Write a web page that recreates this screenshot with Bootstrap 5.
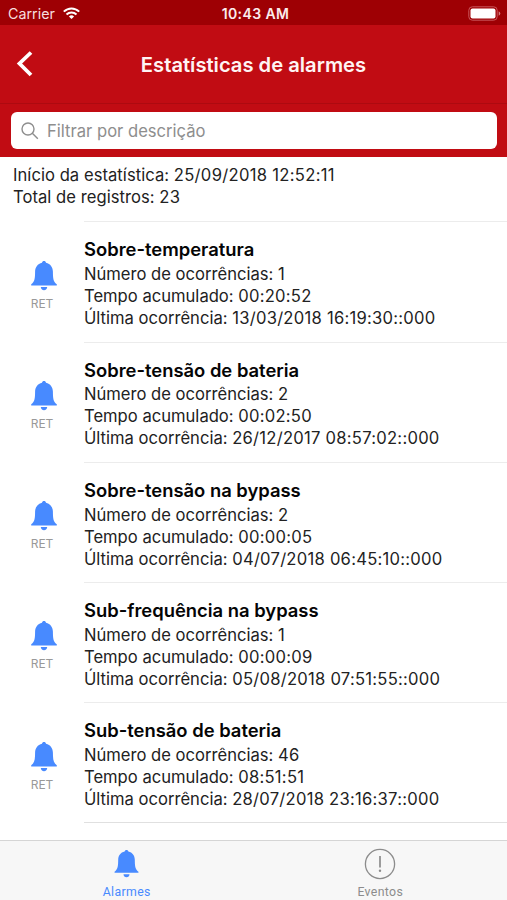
<!DOCTYPE html>
<html lang="pt-BR">
<head>
<meta charset="utf-8">
<meta name="viewport" content="width=device-width, initial-scale=1">
<title>Estatísticas de alarmes</title>
<link href="https://cdn.jsdelivr.net/npm/bootstrap@5.3.0/dist/css/bootstrap.min.css" rel="stylesheet">
<style>
  body { font-family: Inter, "Liberation Sans", sans-serif; color: #222; height: 900px; overflow: hidden; }
  .status-bar { height: 25px; background: #9e0004; font-size: 14.3px; padding: 2px 6px 0 8px; }
  .status-bar > * { flex: 1 1 0; }
  .carrier { color: #f6dede; }
  .wifi { margin-bottom: 2px; }
  .clock { font-weight: 600; font-size: 14px; letter-spacing: .4px; color: #fbecec; padding-left: 2px; }
  .title-bar { height: 79px; background: #c10c13; border-bottom: 1px solid #ad0a10; }
  .title-bar h1 { font-size: 20.2px; font-weight: 600; color: #fff4f4; padding-top: 2px; }
  .side { width: 52px; }
  .search-bar { height: 53px; background: #c10c13; padding: 8px 10px 8px 11px; }
  .search-field { height: 37px; border-radius: 6px; padding: 1px 10px 0; color: #8e8e8e; font-size: 16.6px; }
  .summary { height: 64.4px; padding: 6.5px 13px 0; font-size: 16.6px; line-height: 22px; letter-spacing: .04px; }
  .val { letter-spacing: .25px; }
  .summary .val { letter-spacing: .3px; }
  .alarm-side { width: 84px; padding-top: 39.5px; padding-left: 3px; }
  .alarm-side span { font-size: 12px; line-height: 16px; color: #999; padding-top: 5px; padding-right: 3px; }
  .alarm-text { height: 120.2px; border-top: 1.5px solid #ececec; padding-top: 15px; font-size: 16.6px; line-height: 22px; white-space: nowrap; }
  .alarm-text h2 { font-size: 18.4px; font-weight: 600; line-height: 25.8px; color: #050505; }
  .list-end { margin-left: 84px; border-top: 1px solid #e0e0e0; }
  .tab-bar { height: 60px; background: #f7f7f7; border-top: 1px solid #d5d5d5; font-family: Roboto, sans-serif; font-size: 12.3px; letter-spacing: .35px; line-height: 16px; color: #8c8c8c; }
  .tab-bar a { color: inherit; padding-top: 6.5px; }
  .tab-bar a.active { color: #488aff; }
  .tab-icon { height: 32px; }
  .bell { fill: #488aff; }
</style>
</head>
<body class="bg-white d-flex flex-column">
<svg class="d-none">
  <symbol id="bell" viewBox="0 0 26 30">
    <path d="M13 0c1.100 0 1.800.7 2 1.700C19.400 2.700 21.800 6.200 21.900 10.500C22 16.500 22 20.600 25.800 23.300V24.500H.2V23.300C4 20.600 4 16.500 4.100 10.500C4.200 6.200 6.600 2.700 11 1.700C11.200.7 11.900 0 13 0Z"/>
    <path d="M9.800 26h6.400c0 2-1.400 3.200-3.200 3.200S9.800 28 9.800 26Z"/>
  </symbol>
</svg>

<header class="text-white flex-shrink-0">
  <div class="status-bar d-flex align-items-center">
    <div class="d-flex align-items-center gap-2">
      <span class="carrier">Carrier</span>
      <svg class="wifi" width="17" height="12" viewBox="0 0 17 12" fill="none" stroke="#fff" stroke-width="2"><path d="M.8 4.600C5.200.3 11.800.3 16.200 4.600M3.500 7.400C6.400 4.700 10.600 4.700 13.500 7.400"/><path d="M8.500 12 5.900 9.400Q8.500 7.300 11.100 9.400Z" fill="#fff" stroke="none"/></svg>
    </div>
    <div class="clock text-center">10:43 AM</div>
    <div class="d-flex justify-content-end">
      <svg width="33" height="15" viewBox="0 0 33 15"><rect x=".8" y=".8" width="28.400" height="13.400" rx="3.500" fill="none" stroke="#c9555a"/><rect x="2.500" y="2.500" width="25" height="10" rx="2" fill="#fff"/><path d="M30.700 5.200q1.600.8 1.600 2.300t-1.600 2.300Z" fill="#d57f82"/></svg>
    </div>
  </div>
  <div class="title-bar d-flex align-items-center">
    <div class="side ps-3"><svg class="d-block" width="17" height="26" viewBox="0 0 17 26" fill="none" stroke="#fff" stroke-width="3.800"><path d="M15 1.500 3.500 12.500 15 24"/></svg></div>
    <h1 class="flex-fill text-center m-0">Estatísticas de alarmes</h1>
    <div class="side"></div>
  </div>
  <div class="search-bar">
    <div class="search-field bg-white d-flex align-items-center">
      <svg width="18" height="18" viewBox="0 0 18 18" fill="none" stroke="#8e8e8e" stroke-width="1.400"><circle cx="7" cy="7" r="6"/><path d="m11.300 11.300 5.500 5.500"/></svg>
      <span class="ms-2">Filtrar por descrição</span>
    </div>
  </div>
</header>

<main class="flex-fill overflow-hidden">
  <div class="summary">
    <div>Início da estatística: <span class="val">25/09/2018 12:52:11</span></div>
    <div>Total de registros: <span class="val">23</span></div>
  </div>
  <div class="d-flex">
    <div class="alarm-side d-flex flex-column align-items-center"><svg class="bell" width="26" height="30"><use href="#bell"/></svg><span>RET</span></div>
    <div class="alarm-text flex-fill"><h2 class="m-0">Sobre-temperatura</h2><div>Número de ocorrências: <span class="val">1</span></div><div>Tempo acumulado: <span class="val">00:20:52</span></div><div>Última ocorrência: <span class="val">13/03/2018 16:19:30::000</span></div></div>
  </div>
  <div class="d-flex">
    <div class="alarm-side d-flex flex-column align-items-center"><svg class="bell" width="26" height="30"><use href="#bell"/></svg><span>RET</span></div>
    <div class="alarm-text flex-fill"><h2 class="m-0">Sobre-tensão de bateria</h2><div>Número de ocorrências: <span class="val">2</span></div><div>Tempo acumulado: <span class="val">00:02:50</span></div><div>Última ocorrência: <span class="val">26/12/2017 08:57:02::000</span></div></div>
  </div>
  <div class="d-flex">
    <div class="alarm-side d-flex flex-column align-items-center"><svg class="bell" width="26" height="30"><use href="#bell"/></svg><span>RET</span></div>
    <div class="alarm-text flex-fill"><h2 class="m-0">Sobre-tensão na bypass</h2><div>Número de ocorrências: <span class="val">2</span></div><div>Tempo acumulado: <span class="val">00:00:05</span></div><div>Última ocorrência: <span class="val">04/07/2018 06:45:10::000</span></div></div>
  </div>
  <div class="d-flex">
    <div class="alarm-side d-flex flex-column align-items-center"><svg class="bell" width="26" height="30"><use href="#bell"/></svg><span>RET</span></div>
    <div class="alarm-text flex-fill"><h2 class="m-0">Sub-frequência na bypass</h2><div>Número de ocorrências: <span class="val">1</span></div><div>Tempo acumulado: <span class="val">00:00:09</span></div><div>Última ocorrência: <span class="val">05/08/2018 07:51:55::000</span></div></div>
  </div>
  <div class="d-flex">
    <div class="alarm-side d-flex flex-column align-items-center"><svg class="bell" width="26" height="30"><use href="#bell"/></svg><span>RET</span></div>
    <div class="alarm-text flex-fill"><h2 class="m-0">Sub-tensão de bateria</h2><div>Número de ocorrências: <span class="val">46</span></div><div>Tempo acumulado: <span class="val">08:51:51</span></div><div>Última ocorrência: <span class="val">28/07/2018 23:16:37::000</span></div></div>
  </div>
  <div class="list-end"></div>
</main>

<nav class="tab-bar d-flex flex-shrink-0 text-center">
  <a class="active flex-fill w-50 text-decoration-none" href="#">
    <div class="tab-icon d-flex align-items-center justify-content-center"><svg class="bell" width="25" height="28"><use href="#bell"/></svg></div>
    <div class="pt-1">Alarmes</div>
  </a>
  <a class="flex-fill w-50 text-decoration-none" href="#">
    <div class="tab-icon d-flex align-items-center justify-content-center"><svg width="32" height="32" viewBox="0 0 32 32" fill="none" stroke="#8c8c8c" stroke-width="1.300"><circle cx="16" cy="16" r="14.600"/><path d="M16 8v11.500" stroke-width="1.700"/><circle cx="16" cy="22.800" r="1.200" fill="#8c8c8c" stroke="none"/></svg></div>
    <div class="pt-1">Eventos</div>
  </a>
</nav>
<script src="https://cdn.jsdelivr.net/npm/bootstrap@5.3.0/dist/js/bootstrap.bundle.min.js"></script>
</body>
</html>
